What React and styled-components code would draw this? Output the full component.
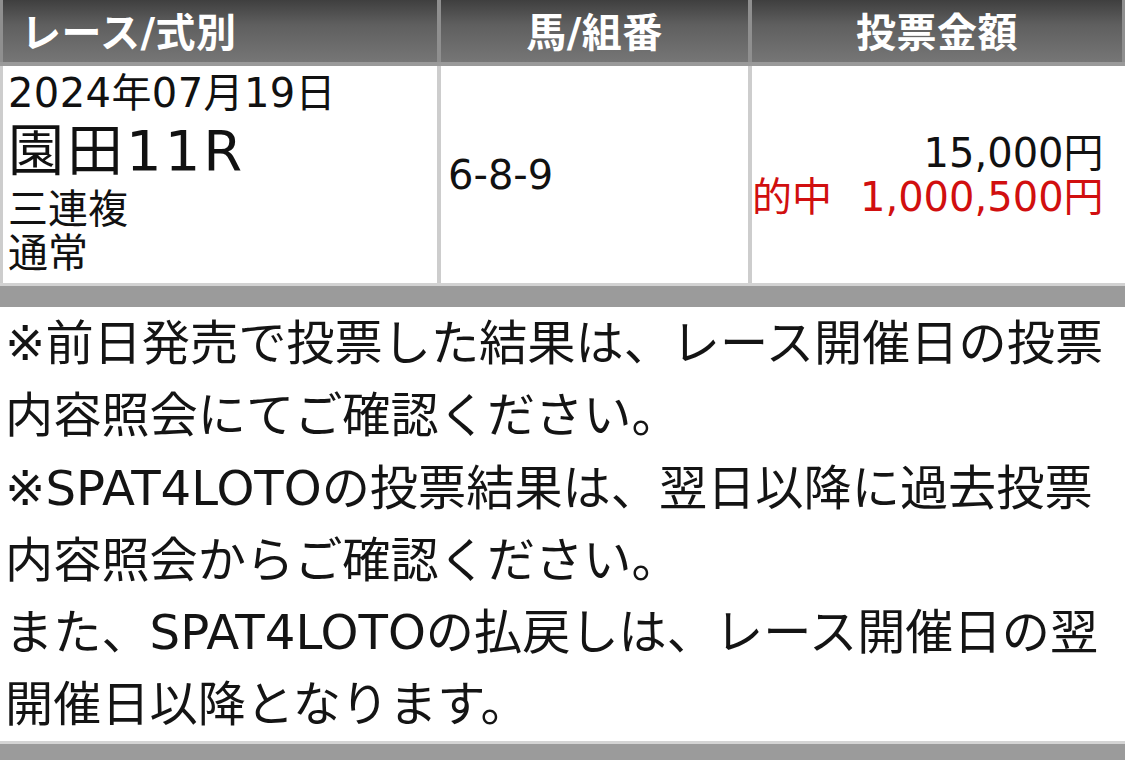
import React from "react";
import styled, { createGlobalStyle } from "styled-components";

const GlobalStyle = createGlobalStyle`
  body {
    margin: 0;
    background: #ffffff;
    font-family: "DejaVu Sans", "Noto Sans CJK JP", sans-serif;
    color: #111;
  }
`;

const notes = [
  ["※前日発売で投票した結果は、レース開催日の投票", "内容照会にてご確認ください。"],
  ["※SPAT4LOTOの投票結果は、翌日以降に過去投票", "内容照会からご確認ください。"],
  ["また、SPAT4LOTOの払戻しは、レース開催日の翌", "開催日以降となります。"],
];

export default function App() {
  return (
    <Page>
      <GlobalStyle />

      {/* header */}
      <HeadRow>
        <HeadCell>レース/式別</HeadCell>
        <HeadCell center>馬/組番</HeadCell>
        <HeadCell center>投票金額</HeadCell>
      </HeadRow>

      {/* bet row */}
      <BodyRow>
        <RaceCell>
          <Line spaced>2024年07月19日</Line>
          <Line big>園田11R</Line>
          <Line>三連複</Line>
          <Line>通常</Line>
        </RaceCell>
        <ComboCell>6-8-9</ComboCell>
        <AmountCell>
          <Line>15,000円</Line>
          <Line hit>
            <HitLabel>的中</HitLabel>1,000,500円
          </Line>
        </AmountCell>
      </BodyRow>
      <Band />

      {/* notes */}
      <Notes>
        {notes.map((p, i) => (
          <Note key={i}>
            {p[0]}
            <br />
            {p[1]}
          </Note>
        ))}
      </Notes>
      <Band />
    </Page>
  );
}

/* ---------- styled ---------- */

const Page = styled.div`
  width: 1125px;
  height: 760px;
  overflow: hidden;
`;

const HeadRow = styled.div`
  display: grid;
  grid-template-columns: 434px 307px 1fr;
  column-gap: 4px;
  padding: 0 3px;
  background: #8f8f8f;
  border-bottom: 4px solid #9a9a9a;
`;

const HeadCell = styled.div`
  height: 62px;
  display: flex;
  align-items: center;
  justify-content: ${({ center }) => (center ? "center" : "flex-start")};
  padding-left: ${({ center }) => (center ? "0" : "18px")};
  padding-bottom: 2px;
  box-sizing: border-box;
  background: linear-gradient(#3f3f3f 0%, #5f5f5f 40%, #767676 100%);
  color: #fff;
  font-size: 40px;
  font-weight: 700;
  letter-spacing: 0.5px;
`;

const BodyRow = styled.div`
  display: grid;
  grid-template-columns: 434px 307px 1fr;
  column-gap: 4px;
  padding: 0 3px;
  background: #cdcdcd;
  border-bottom: 3px solid #d2d2d2;
`;

const Cell = styled.div`
  height: 217px;
  box-sizing: border-box;
  background: #fff;
`;

const RaceCell = styled(Cell)`
  padding: 5px 0 0 5px;
`;

const ComboCell = styled(Cell)`
  display: flex;
  align-items: center;
  padding-left: 7px;
  font-size: 40px;
`;

const AmountCell = styled(Cell)`
  display: flex;
  flex-direction: column;
  justify-content: center;
  align-items: flex-end;
  padding-right: 22px;
`;

const Line = styled.div`
  font-size: ${({ big }) => (big ? "56px" : "40px")};
  line-height: ${({ big }) => (big ? "72px" : "44px")};
  letter-spacing: ${({ big, spaced }) => (big ? "3px" : spaced ? "0.4px" : "0")};
  color: ${({ hit }) => (hit ? "#d10f0f" : "#111")};
  white-space: nowrap;
`;

const HitLabel = styled.span`
  margin-right: 28px;
`;

const Band = styled.div`
  height: 21px;
  background: #9b9b9b;
`;

const Notes = styled.div`
  padding-left: 5px;
  border-bottom: 3px solid #d4d4d4;
`;

const Note = styled.p`
  margin: 0;
  font-size: 48.2px;
  line-height: 72.3px;
  white-space: nowrap;
  color: #141414;
`;
